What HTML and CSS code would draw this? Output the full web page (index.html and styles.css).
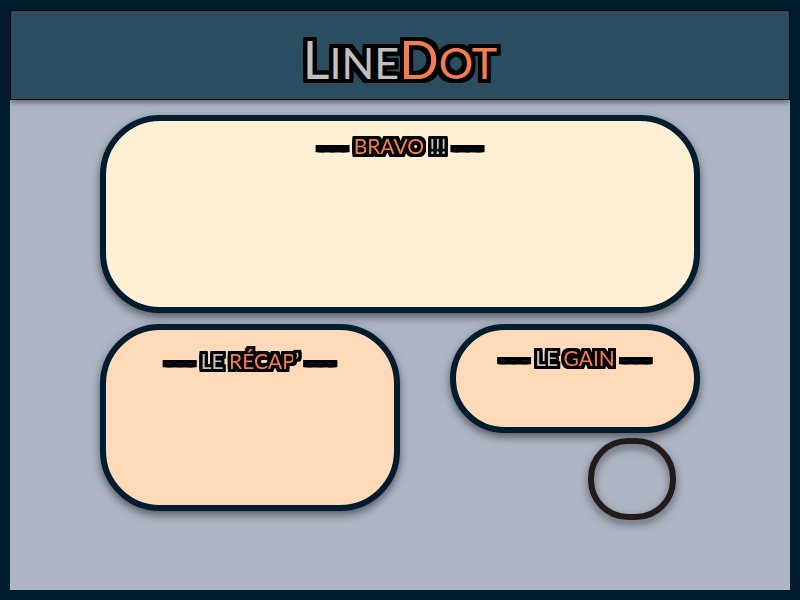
FILE: index.html
```html
<!DOCTYPE html>
<html lang="fr">
<head>
<meta charset="utf-8">
<title>LineDot</title>
<link rel="stylesheet" href="styles.css">
</head>
<body>
<header class="banner">
  <h1 class="logo"><span class="initial">L</span>ine<span class="accent"><span class="initial">D</span>ot</span></h1>
</header>
<main class="board">
  <section class="panel panel-main">
    <h2 class="heading"><span class="dash">–––</span> <span class="accent">Bravo</span> !!! <span class="dash">–––</span></h2>
  </section>
  <div class="row">
    <section class="panel panel-recap">
      <h2 class="heading"><span class="dash">–––</span> Le <span class="accent">Récap</span>’ <span class="dash">–––</span></h2>
    </section>
    <div class="side">
      <section class="panel panel-gain">
        <h2 class="heading"><span class="dash">–––</span> Le <span class="accent">Gain</span> <span class="dash">–––</span></h2>
      </section>
      <button class="round" type="button" aria-label="Continuer"></button>
    </div>
  </div>
</main>
</body>
</html>
```

FILE: styles.css
```css
* {
  box-sizing: border-box;
}

body {
  margin: 0;
  min-height: 100vh;
  border: 10px solid #001c2e;
  background: #adb5c4;
  color: #bfc0c0;
  font-family: Lato, sans-serif;
}

.banner {
  display: flex;
  justify-content: center;
  height: 90px;
  padding-top: 16px;
  border: 1px solid #000;
  background: #2b4d60;
  box-shadow: 0 2px 6px rgba(0, 0, 0, 0.5);
}

.logo,
.heading {
  margin: 0;
  font-weight: 400;
  text-align: center;
  text-transform: uppercase;
  white-space: nowrap;
}

.logo {
  font-size: 43px;
  line-height: 64px;
  text-shadow:
    4px 0 #000, -4px 0 #000, 0 4px #000, 0 -4px #000,
    4px 2px #000, -4px 2px #000, 4px -2px #000, -4px -2px #000,
    2px 4px #000, -2px 4px #000, 2px -4px #000, -2px -4px #000,
    4px 4px #000, -4px 4px #000, 4px -4px #000, -4px -4px #000;
}

.initial {
  font-size: 52px;
}

.accent {
  color: #f27e50;
}

.dash {
  color: #001c2e;
  font-size: 18px;
}

.board {
  max-width: 620px;
  margin: 0 auto;
  padding: 15px 10px;
}

.panel {
  border: 6px solid #001c2e;
  border-radius: 60px;
  background: #ffdab9;
  filter: drop-shadow(0 4px 4px rgba(0, 0, 0, 0.5));
}

.panel-main {
  height: 198px;
  padding-top: 11px;
  background: #ffefd5;
}

.heading {
  font-size: 21px;
  line-height: 28px;
  text-shadow:
    0 1px #000, 0 -1px #000, 0 2px #000, 0 -2px #000,
    0 3px #000, 0 -3px #000, 3px 0 #000, -3px 0 #000,
    1px 0 #000, -1px 0 #000, 2px 0 #000, -2px 0 #000,
    1px 3px #000, -1px 3px #000, 1px -3px #000, -1px -3px #000,
    2px 3px #000, -2px 3px #000, 2px -3px #000, -2px -3px #000,
    2px 1px #000, -2px 1px #000, 2px -1px #000, -2px -1px #000,
    2px 2px #000, -2px 2px #000, 2px -2px #000, -2px -2px #000,
    3px 1px #000, -3px 1px #000, 3px -1px #000, -3px -1px #000,
    3px 2px #000, -3px 2px #000, 3px -2px #000, -3px -2px #000,
    3px 3px #000, -3px 3px #000, 3px -3px #000, -3px -3px #000;
}

.row {
  display: flex;
  justify-content: space-between;
  margin-top: 11px;
}

.panel-recap {
  flex: 0 1 300px;
  height: 187px;
  padding-top: 17px;
}

.side {
  display: flex;
  flex: 0 1 250px;
  flex-direction: column;
}

.panel-gain {
  height: 109px;
  padding-top: 14px;
}

.round {
  align-self: flex-end;
  width: 88px;
  height: 82px;
  margin: 5px 24px 0 0;
  border: 6px solid #231a1c;
  border-radius: 40px;
  background: transparent;
  filter: drop-shadow(0 4px 4px rgba(0, 0, 0, 0.5));
}
```
